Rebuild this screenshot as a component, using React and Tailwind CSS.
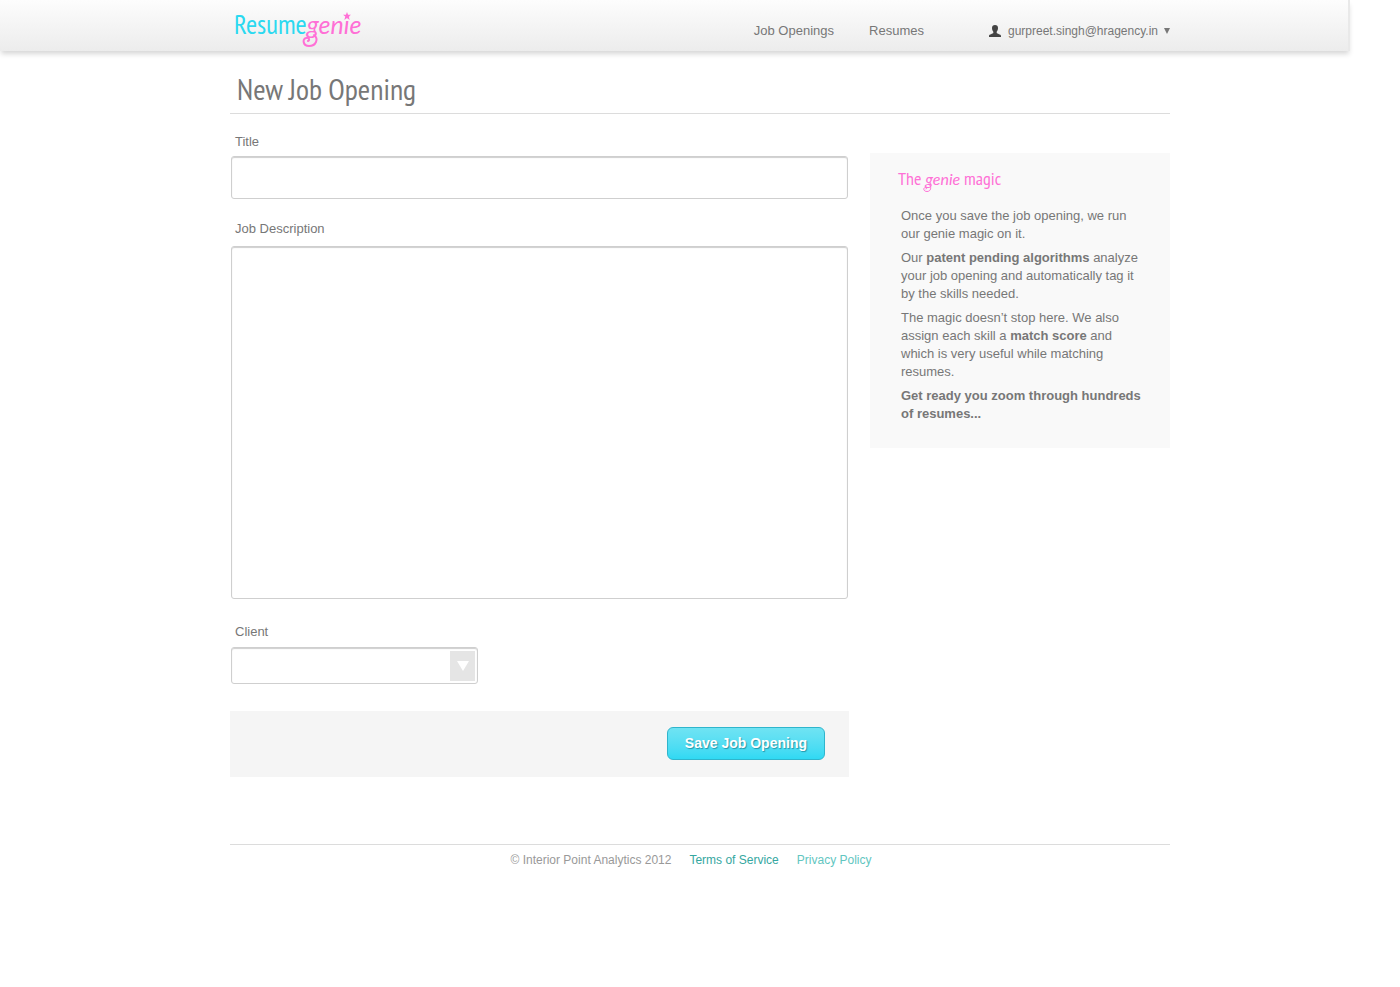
import React from "react";

const field =
  "block w-full rounded-[3px] border border-[#cfcfcf] bg-white px-3 text-[13px] text-[#777] shadow-[inset_0_1px_1px_#cfcfcf] outline-none focus:border-[#35c6de]";
const label = "block pl-1 text-[13px] leading-[18px]";

function Logo() {
  return (
    <a
      href="#home"
      className="relative mb-1 flex items-baseline pl-1 font-['PT_Sans_Narrow','Liberation_Sans_Narrow',sans-serif] text-[27px] leading-8 text-[#2bd9f0]"
    >
      <span>Resume</span>
      <span className="font-[Lato,sans-serif] text-[25px] italic text-[#ff70d6]">genie</span>
      <svg
        className="absolute -bottom-[7px] left-[72px] h-4 w-[18px]"
        viewBox="0 0 18 16"
        fill="none"
        stroke="#ff70d6"
        strokeWidth="2"
        strokeLinecap="round"
        aria-hidden="true"
      >
        <path d="M12 4 C17 8 14 15 7 15 C1 15 0 8 4 7 C7 6 8 9 6 10" />
      </svg>
      <svg className="absolute top-1 left-[113px] h-2 w-2" viewBox="0 0 6 6" fill="#ff70d6" aria-hidden="true">
        <path d="M3 0 3.800 2H6L4.300 3.400 5 6 3 4.500 1 6 1.700 3.400 0 2H2.200Z" />
      </svg>
    </a>
  );
}

function Header() {
  return (
    <header className="mr-[50px] border-r-2 border-[#e9e9e9] bg-linear-to-b from-[#fdfdfd] to-[#ececec] shadow-[0_4px_5px_-1px_rgba(0,0,0,0.16)]">
      <div className="-mr-[52px]">
        <div className="mx-auto flex h-[51px] max-w-[940px] items-center justify-between">
          <Logo />
          <nav className="flex items-center pt-[11px] text-[13px] leading-[18px]">
            <a href="#jobs">Job Openings</a>
            <a href="#resumes" className="ml-[35px]">Resumes</a>
            <button type="button" className="ml-[65px] flex items-center text-xs leading-[18px]">
              <svg className="mr-[7px] h-3 w-3" viewBox="0 0 12 12" fill="#444" aria-hidden="true">
                <path d="M6 0C4 0 3 1.200 3 3c0 1.700.7 3 1.300 3.800v1.200C4 9 0 9 0 11v1h12v-1c0-2-4-2-4.300-3V6.800C8.300 6 9 4.700 9 3c0-1.800-1-3-3-3Z" />
              </svg>
              gurpreet.singh@hragency.in
              <svg className="ml-[6px] h-[6px] w-[6px]" viewBox="0 0 6 6" fill="#777" aria-hidden="true">
                <path d="M0 0h6L3 6Z" />
              </svg>
            </button>
          </nav>
        </div>
      </div>
    </header>
  );
}

function JobForm() {
  return (
    <form className="min-w-0 flex-1 pt-[19px]" onSubmit={(e) => e.preventDefault()}>
      <div className="px-px">
        <label htmlFor="title" className={label}>Title</label>
        <input id="title" type="text" className={`${field} mt-[5px] h-[43px]`} />
        <label htmlFor="description" className={`${label} mt-[21px]`}>Job Description</label>
        <textarea id="description" className={`${field} mt-2 h-[353px] resize-none py-2`} />
        <label htmlFor="client" className={`${label} mt-6`}>Client</label>
        <div className="relative mt-[6px] w-[247px]">
          <select id="client" className={`${field} h-[37px] appearance-none`}>
            <option value=""></option>
          </select>
          <span className="pointer-events-none absolute top-1 right-[3px] flex h-[30px] w-[25px] items-center justify-center bg-[#e5e5e5]">
            <svg className="h-[10px] w-3" viewBox="0 0 12 10" fill="#fff" aria-hidden="true">
              <path d="M0 0h12L6 10Z" />
            </svg>
          </span>
        </div>
      </div>
      <div className="mt-[27px] flex justify-end bg-[#f5f5f5] px-6 pt-4 pb-[17px]">
        <button
          type="submit"
          className="h-[33px] rounded-md border border-[#2fb5cc] bg-linear-to-b from-[#6fe3f3] to-[#2fd9f3] px-[17px] pb-[2px] text-sm font-bold text-white [text-shadow:1px_1px_1px_#2596a8]"
        >
          Save Job Opening
        </button>
      </div>
    </form>
  );
}

function GenieMagic() {
  return (
    <aside className="mt-[39px] w-[300px] shrink-0 bg-[#f9f9f9] px-7 pt-[14px] pb-[25px]">
      <h2 className="relative font-['PT_Sans_Narrow','Liberation_Sans_Narrow',sans-serif] text-lg leading-5 text-[#ff70d6]">
        The <span className="font-[Lato,sans-serif] text-base italic">genie</span> magic
        <svg
          className="absolute top-4 left-[25px] h-[9px] w-[9px]"
          viewBox="0 0 9 9"
          fill="none"
          stroke="#ff70d6"
          strokeLinecap="round"
          aria-hidden="true"
        >
          <path d="M6 1 C9 4 8 8.500 4 8.500 C0 8.500 0 4.500 2.500 4.500 C4 4.500 4 6 3 6" />
        </svg>
      </h2>
      <div className="mt-4 -mr-1 space-y-[6px] pl-[3px] text-[13px] leading-[18px]">
        <p>Once you save the job opening, we run our genie magic on it.</p>
        <p>
          Our <b>patent pending algorithms</b> analyze your job opening and automatically tag it by the
          skills needed.
        </p>
        <p>
          The magic doesn’t stop here. We also assign each skill a <b>match score</b> and which is very
          useful while matching resumes.
        </p>
        <p className="font-bold">Get ready you zoom through hundreds of resumes...</p>
      </div>
    </aside>
  );
}

export default function App() {
  return (
    <div className="min-h-screen bg-white font-['Liberation_Sans',Arial,sans-serif] text-[#777]">
      <Header />
      <div className="mx-auto max-w-[940px]">
        <main>
          <h1 className="border-b border-[#dcdcdc] pt-[18px] pb-[5px] pl-[7px] font-['PT_Sans_Narrow','Liberation_Sans_Narrow',sans-serif] text-[30px] leading-[39px]">
            New Job Opening
          </h1>
          <div className="flex items-start gap-[21px]">
            <JobForm />
            <GenieMagic />
          </div>
        </main>
        <footer className="mt-[67px] flex justify-center gap-[18px] border-t border-[#dcdcdc] pt-[6px] pr-[18px] text-xs leading-[18px] text-[#999]">
          <span>© Interior Point Analytics 2012</span>
          <a href="#terms" className="text-[#35a79f]">Terms of Service</a>
          <a href="#privacy" className="text-[#62c6bf]">Privacy Policy</a>
        </footer>
      </div>
    </div>
  );
}
